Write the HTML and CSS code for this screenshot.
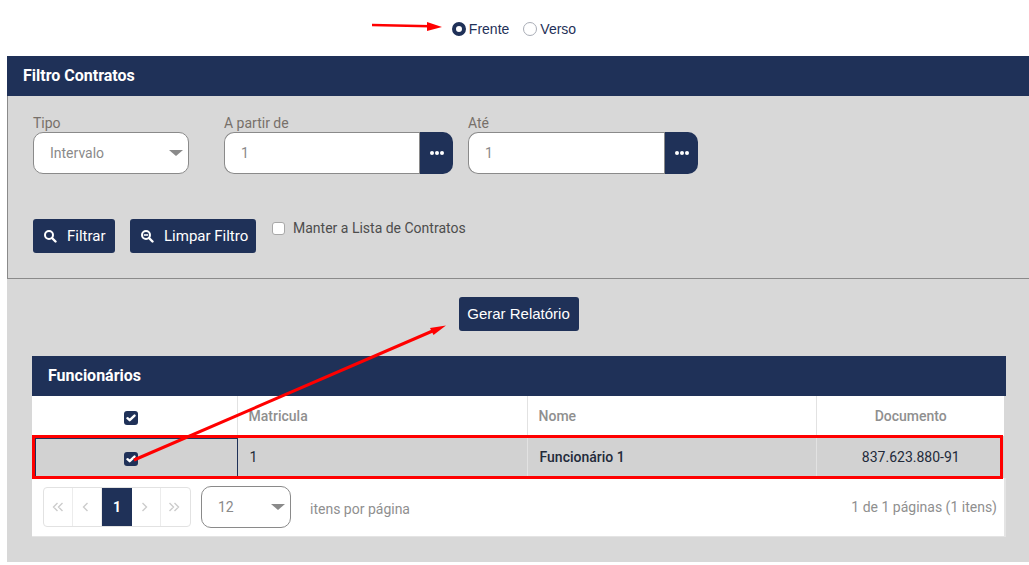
FILE: index.html
```html
<!DOCTYPE html>
<html lang="en">
<head>
  <meta charset="UTF-8" />
  <title>Contratos</title>
  <link rel="stylesheet" href="styles.css">
</head>

<body>

  <div class="side-choice">
    <label class="radio-item"><span class="radio on"></span>Frente</label>
    <label class="radio-item"><span class="radio"></span>Verso</label>
  </div>

  <div class="page-box">

    <div class="filter-box">
      <div class="box-title">Filtro Contratos</div>
      <div class="filter-body">
        <div class="field-row">
          <div class="field field-tipo">
            <div class="field-label">Tipo</div>
            <div class="select-box">Intervalo<span class="caret"></span></div>
          </div>
          <div class="field field-from">
            <div class="field-label">A partir de</div>
            <div class="input-group">
              <div class="input-box">1</div>
              <div class="dots-btn"><span></span><span></span><span></span></div>
            </div>
          </div>
          <div class="field field-to">
            <div class="field-label">Até</div>
            <div class="input-group">
              <div class="input-box">1</div>
              <div class="dots-btn"><span></span><span></span><span></span></div>
            </div>
          </div>
        </div>
        <div class="action-row">
          <div class="btn btn-filter">
            <svg width="14" height="14" viewBox="0 0 14 14"><circle cx="6" cy="6" r="4" fill="none" stroke="#fff" stroke-width="2"/><path d="M9 9l3.5 3.500" stroke="#fff" stroke-width="2.400" stroke-linecap="round"/></svg>
            Filtrar
          </div>
          <div class="btn btn-clear">
            <svg width="14" height="14" viewBox="0 0 14 14"><circle cx="6" cy="6" r="4" fill="none" stroke="#fff" stroke-width="2"/><path d="M9 9l3.5 3.500" stroke="#fff" stroke-width="2.400" stroke-linecap="round"/><path d="M3.800 6h4.400" stroke="#fff" stroke-width="1.600"/></svg>
            Limpar Filtro
          </div>
          <label class="keep-list"><span class="plain-check"></span>Manter a Lista de Contratos</label>
        </div>
      </div>
    </div>

    <div class="report-row">
      <div class="btn btn-report">Gerar Relatório</div>
    </div>

    <div class="staff-box">
      <div class="box-title staff-title">Funcionários</div>
      <table class="staff-table">
        <colgroup>
          <col class="col-check"><col class="col-mat"><col class="col-name"><col class="col-doc">
        </colgroup>
        <thead>
          <tr>
            <th class="cell-check"><span class="check"><svg width="10" height="8" viewBox="0 0 10 8"><path d="M1.500 4.200l2.200 2 4.800-4.600" fill="none" stroke="#fff" stroke-width="2.400" stroke-linecap="round" stroke-linejoin="round"/></svg></span></th>
            <th>Matricula</th>
            <th>Nome</th>
            <th class="cell-doc">Documento</th>
          </tr>
        </thead>
        <tbody>
          <tr class="selected">
            <td class="cell-check"><span class="check"><svg width="10" height="8" viewBox="0 0 10 8"><path d="M1.500 4.200l2.200 2 4.800-4.600" fill="none" stroke="#fff" stroke-width="2.400" stroke-linecap="round" stroke-linejoin="round"/></svg></span></td>
            <td>1</td>
            <td class="cell-name">Funcionário 1</td>
            <td class="cell-doc">837.623.880-91</td>
          </tr>
        </tbody>
      </table>
      <div class="pager-row">
        <div class="pager">
          <div class="page-cell"><svg width="12" height="10" viewBox="0 0 12 10"><path d="M5.500 1L1.500 5l4 4M10.500 1l-4 4 4 4" fill="none" stroke="#ccc" stroke-width="1.400"/></svg></div>
          <div class="page-cell nudge"><svg width="7" height="10" viewBox="0 0 7 10"><path d="M5.500 1L1.500 5l4 4" fill="none" stroke="#ccc" stroke-width="1.400"/></svg></div>
          <div class="page-cell active">1</div>
          <div class="page-cell nudge"><svg width="7" height="10" viewBox="0 0 7 10"><path d="M1.500 1l4 4-4 4" fill="none" stroke="#ccc" stroke-width="1.400"/></svg></div>
          <div class="page-cell nudge"><svg width="12" height="10" viewBox="0 0 12 10"><path d="M1.500 1l4 4-4 4M6.500 1l4 4-4 4" fill="none" stroke="#ccc" stroke-width="1.400"/></svg></div>
        </div>
        <div class="select-box page-size">12<span class="caret"></span></div>
        <div class="per-page">itens por página</div>
        <div class="page-info">1 de 1 páginas (1 itens)</div>
      </div>
    </div>

  </div>

  <!-- red marks drawn on top of the screenshot -->
  <svg class="marks" width="1029" height="565" viewBox="0 0 1029 565">
    <path d="M372 25L430 26.300" stroke="#f00" stroke-width="2.600" fill="none"/>
    <path d="M427 22L442 27L427 31z" fill="#f00"/>
    <rect x="33.500" y="436.500" width="968" height="41" fill="none" stroke="#f00" stroke-width="3"/>
    <path d="M134 460L436 329.500" stroke="#f00" stroke-width="3" fill="none"/>
    <path d="M430 328L446 325.500L433.500 335z" fill="#f00"/>
  </svg>

</body>
</html>
```

FILE: styles.css
```css
body {
  margin: 0;
  padding: 0;
  background-color: white;
  font-family: Roboto, "Liberation Sans", sans-serif;
  font-size: 14px;
  height: 565px;
  overflow: hidden;
  position: relative;
}

/* frente / verso */
.side-choice {
  height: 56px;
  display: flex;
  justify-content: center;
  align-items: center;
  gap: 14px;
  padding: 2px 1px 0 0;
  box-sizing: border-box;
  font-family: "Liberation Sans", Arial, sans-serif;
  color: #1f3158;
}

.radio-item {
  display: flex;
  align-items: center;
  gap: 3px;
}

.radio {
  width: 14px;
  height: 14px;
  box-sizing: border-box;
  border: 1px solid #a9adb6;
  border-radius: 50%;
  background-color: white;
}

.radio.on {
  border: 4px solid #1f3158;
}

.page-box {
  margin-left: 7px;
  height: 506px;
  background-color: #d8d8d8;
}

.box-title {
  height: 40px;
  background-color: #1f3158;
  color: white;
  font-weight: 700;
  font-size: 16px;
  line-height: 39px;
  padding-left: 16px;
}

.filter-body {
  height: 183px;
  box-sizing: border-box;
  border-left: 1px solid #8a8a8a;
  border-bottom: 1px solid #8a8a8a;
  padding: 18px 0 0 25px;
}

.field-row {
  display: flex;
}

.field-label {
  color: #77706a;
  line-height: 18px;
}

.field-tipo { width: 156px; margin-right: 35px; }
.field-from { width: 229px; margin-right: 15px; }
.field-to { width: 230px; }

.select-box {
  height: 42px;
  box-sizing: border-box;
  border: 1px solid #8a8a8a;
  border-radius: 10px;
  background-color: white;
  color: #8a8a8a;
  display: flex;
  align-items: center;
  justify-content: space-between;
  padding: 0 5px 0 16px;
}

.caret {
  width: 0;
  height: 0;
  border-left: 7px solid transparent;
  border-right: 7px solid transparent;
  border-top: 6px solid #8a8a8a;
}

.input-group {
  display: flex;
  height: 42px;
}

.input-box {
  flex: 1;
  box-sizing: border-box;
  border: 1px solid #8a8a8a;
  border-right: none;
  border-radius: 10px 0 0 10px;
  background-color: white;
  color: #8a8a8a;
  line-height: 40px;
  padding-left: 16px;
}

.dots-btn {
  width: 34px;
  background-color: #1f3158;
  border-left: 1px solid #8a8a8a;
  box-sizing: border-box;
  border-radius: 0 10px 10px 0;
  display: flex;
  align-items: center;
  justify-content: center;
  gap: 1px;
}

.dots-btn span {
  width: 4px;
  height: 4px;
  border-radius: 50%;
  background-color: white;
}

.action-row {
  display: flex;
  margin-top: 45px;
}

.btn {
  height: 34px;
  box-sizing: border-box;
  background-color: #1f3158;
  color: white;
  font-size: 15px;
  border-radius: 3px;
  display: flex;
  align-items: center;
}

.btn-filter {
  width: 82px;
  padding-left: 10px;
  gap: 10px;
  margin-right: 15px;
}

.btn-clear {
  width: 126px;
  padding-left: 10px;
  gap: 10px;
  margin-right: 16px;
}

.keep-list {
  display: flex;
  align-items: center;
  height: 18px;
  color: #4d4d4d;
  gap: 8px;
}

.plain-check {
  width: 13px;
  height: 13px;
  box-sizing: border-box;
  background-color: white;
  border: 1px solid #a8a8a8;
  border-radius: 3px;
}

.report-row {
  display: flex;
  justify-content: center;
  padding: 18px 0 25px 1px;
}

.btn-report {
  width: 120px;
  justify-content: center;
  padding-bottom: 2px;
  font-family: "Liberation Sans", Arial, sans-serif;
}

.staff-box {
  margin-left: 25px;
  width: 974px;
}

.staff-table {
  width: 972px;
  table-layout: fixed;
  border-collapse: collapse;
  background-color: white;
}

.col-check { width: 205px; }
.col-mat { width: 290px; }
.col-name { width: 289px; }
.col-doc { width: 188px; }

.staff-table th {
  height: 40px;
  padding: 0 0 0 11px;
  box-sizing: border-box;
  text-align: left;
  font-weight: 500;
  color: #8f8f8f;
  border-right: 1px solid #e2e2e2;
}

.staff-table td {
  height: 42px;
  padding: 0 0 0 12px;
  box-sizing: border-box;
  background-color: #d2d2d2;
  color: #222a3a;
  border-right: 1px solid #e2e2e2;
}

.staff-table .cell-check {
  text-align: center;
  padding: 0 7px 0 0;
  line-height: 0;
}

.staff-table td.cell-check {
  border-right: 1px solid #1f3158;
  box-shadow: inset 4px 3px 0 #1f3158;
}

.staff-table .cell-doc {
  text-align: center;
  padding: 0 0 0 1px;
  border-right: none;
}

.cell-name {
  font-weight: 500;
}

.check {
  display: inline-flex;
  width: 14px;
  height: 14px;
  margin-top: 4px;
  background-color: #1f3158;
  border-radius: 3px;
  align-items: center;
  justify-content: center;
}

.pager-row {
  height: 59px;
  box-sizing: border-box;
  background-color: white;
  border-bottom: 1px solid #e4e4e4;
  border-right: 2px solid #e4e4e4;
  display: flex;
  align-items: center;
  padding: 0 7px 1px 11px;
}

.pager {
  display: flex;
  height: 40px;
  box-sizing: border-box;
  border: 1px solid #e2e2e2;
  border-radius: 4px;
  margin-right: 10px;
}

.page-cell {
  width: 29px;
  box-sizing: border-box;
  display: flex;
  align-items: center;
  justify-content: center;
  border-right: 1px solid #ececec;
}

.page-cell:last-child {
  border-right: none;
}

.page-cell.nudge svg {
  margin-right: 3px;
}

.page-cell.active {
  width: 30px;
  background-color: #1f3158;
  color: white;
  font-weight: 700;
  border-right: none;
}

.page-size {
  width: 90px;
  padding: 0 5px 0 16px;
  color: #8a8a8a;
}

.per-page {
  margin-left: 19px;
  color: #8f8f8f;
  padding-top: 4px;
}

.page-info {
  margin-left: auto;
  color: #8f8f8f;
}

.marks {
  position: absolute;
  top: 0;
  left: 0;
  pointer-events: none;
}
```
